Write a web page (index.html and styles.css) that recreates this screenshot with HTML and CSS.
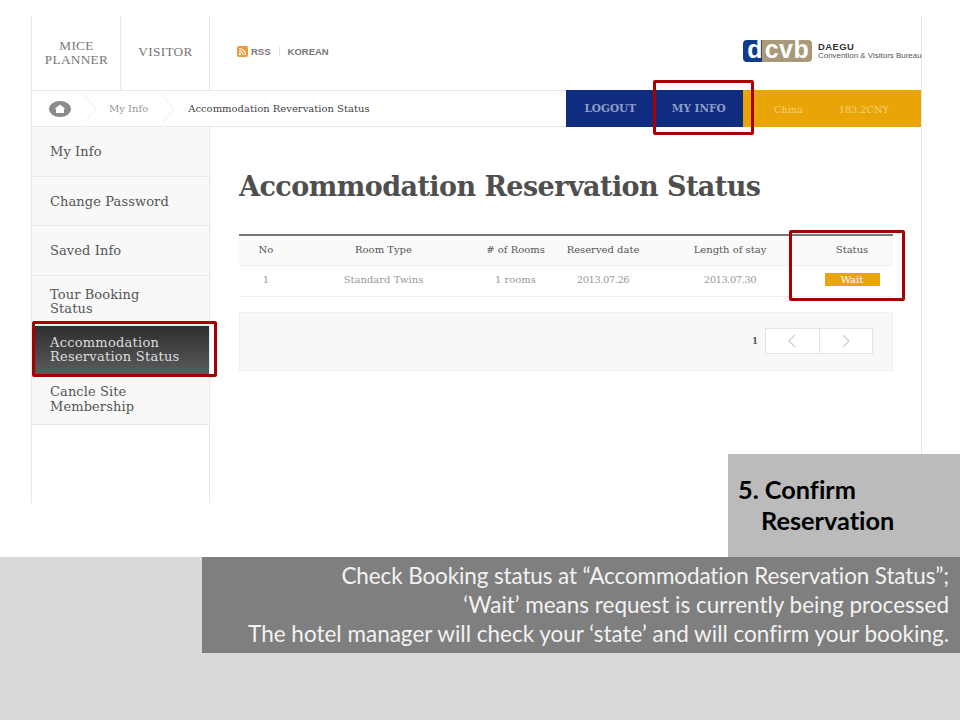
FILE: index.html
```html
<!DOCTYPE html>
<html lang="en">
<head>
<meta charset="utf-8">
<title>Accommodation Reservation Status</title>
<link rel="stylesheet" href="styles.css">
</head>
<body>
<div class="slide">
  <div class="site">
    <header class="top">
      <a class="top-tab tab-mice">MICE<br>PLANNER</a>
      <a class="top-tab tab-visitor">VISITOR</a>
      <div class="links">
        <svg class="rss" viewBox="0 0 11 11" width="11" height="11"><rect width="11" height="11" rx="2" fill="#ee9a3a"/><circle cx="3" cy="8" r="1.2" fill="#fff"/><path d="M2 5a4 4 0 0 1 4 4M2 2.500A6.500 6.500 0 0 1 8.500 9" fill="none" stroke="#fff" stroke-width="1.200"/></svg>
        <span>RSS</span><i class="sep"></i><span>KOREAN</span>
      </div>
      <div class="logo">
        <span class="logo-d">d</span><span class="logo-cvb">cvb</span>
        <div class="logo-text"><b>DAEGU</b><span>Convention &amp; Visitors Bureau</span></div>
      </div>
    </header>
    <div class="bar">
      <div class="crumbs">
        <span class="home"><svg viewBox="0 0 22 16" width="22" height="16"><ellipse cx="11" cy="8" rx="11" ry="8" fill="#8a8a8a"/><path d="M5.500 8 11 3.500 16.500 8H15v4H7V8z" fill="#fff"/></svg></span>
        <svg class="chev" viewBox="0 0 14 30" width="14" height="30"><path d="M1 1l12 14L1 29" fill="none" stroke="#eee"/></svg>
        <span class="crumb-a">My Info</span>
        <svg class="chev" viewBox="0 0 14 30" width="14" height="30"><path d="M1 1l12 14L1 29" fill="none" stroke="#eee"/></svg>
        <span class="crumb-b">Accommodation Revervation Status</span>
      </div>
      <div class="user-blue"><span>LOGOUT</span><span>MY INFO</span></div>
      <div class="user-gold"><span>China</span><span>183.2CNY</span></div>
    </div>
    <div class="content">
      <nav class="side">
        <a class="item">My Info</a>
        <a class="item">Change Password</a>
        <a class="item">Saved Info</a>
        <a class="item item-low">Tour Booking<br>Status</a>
        <a class="item item-flat active">Accommodation<br>Reservation Status</a>
        <a class="item item-flat">Cancle Site<br>Membership</a>
      </nav>
      <main class="main">
        <h1>Accommodation Reservation Status</h1>
        <table>
          <thead>
            <tr><th class="c1">No</th><th class="c2">Room Type</th><th class="c3"># of Rooms</th><th class="c4">Reserved date</th><th class="c5">Length of stay</th><th class="c6">Status</th></tr>
          </thead>
          <tbody>
            <tr><td>1</td><td>Standard Twins</td><td>1 rooms</td><td class="date">2013.07.26</td><td class="date">2013.07.30</td><td><span class="wait">Wait</span></td></tr>
          </tbody>
        </table>
        <div class="pager">
          <b>1</b>
          <div class="pager-btns">
            <span><svg viewBox="0 0 10 14" width="10" height="14"><path d="M8 1 2 7l6 6" fill="none" stroke="#ccc" stroke-width="1.200"/></svg></span>
            <span><svg viewBox="0 0 10 14" width="10" height="14"><path d="M2 1l6 6-6 6" fill="none" stroke="#ccc" stroke-width="1.200"/></svg></span>
          </div>
        </div>
      </main>
    </div>
  </div>
  <div class="tag">
    <p>5. Confirm</p>
    <p class="indent">Reservation</p>
  </div>
  <footer class="foot">
    <div class="note">
      <p class="tight">Check Booking status at “Accommodation Reservation Status”;</p>
      <p>‘Wait’ means request is currently being processed</p>
      <p>The hotel manager will check your ‘state’ and will confirm your booking.</p>
    </div>
  </footer>
  <div class="mark mark-info"></div>
  <div class="mark mark-status"></div>
  <div class="mark mark-side"></div>
</div>
</body>
</html>
```
FILE: styles.css
```css
* { box-sizing: border-box; }
html, body { margin: 0; padding: 0; background: #fff; }
p, h1 { margin: 0; }
.slide {
  position: relative;
  width: 960px;
  height: 720px;
  overflow: hidden;
  background: #fff;
  padding-top: 16px;
  font-family: "DejaVu Serif", serif;
}
.site {
  margin-left: 31px;
  width: 891px;
  height: 487px;
  border-left: 1px solid #e8e8e8;
  border-right: 1px solid #e8e8e8;
  display: flex;
  flex-direction: column;
}
.top {
  height: 74px;
  display: flex;
  align-items: center;
}
.top-tab {
  height: 74px;
  border-right: 1px solid #e6e6e6;
  display: flex;
  align-items: center;
  justify-content: center;
  text-align: center;
  font-family: "Liberation Serif", serif;
  font-size: 13.300px;
  line-height: 14px;
  color: #777;
  letter-spacing: .3px;
}
.tab-mice { width: 89px; padding-left: 1px; }
.tab-visitor { width: 89px; padding: 0 0 2px 1px; }
.links {
  margin-left: 27px;
  margin-bottom: 3px;
  display: flex;
  align-items: center;
  font-family: "Liberation Sans", sans-serif;
  font-size: 9.500px;
  font-weight: bold;
  color: #777;
}
.rss { margin-right: 3px; }
.sep { width: 1px; height: 9px; background: #ddd; margin: 0 8px; }
.logo {
  margin-left: auto;
  display: flex;
  align-items: center;
  height: 22px;
  font-family: "Liberation Sans", sans-serif;
  font-weight: bold;
  margin-bottom: 4px;
}
.logo-d, .logo-cvb {
  height: 22px;
  display: flex;
  align-items: center;
  justify-content: center;
  color: #fff;
  font-size: 25px;
  line-height: 1;
  padding-bottom: 3px;
}
.logo-d { width: 19px; background: #123a8c; border-radius: 4px 0 0 4px; padding-left: 5px; }
.logo-cvb { width: 50px; background: #a89a78; border-radius: 0 4px 4px 0; letter-spacing: .5px; }
.logo-text {
  display: flex;
  flex-direction: column;
  width: 103px;
  margin-left: 6px;
  color: #333;
  line-height: 9px;
}
.logo-text b { font-size: 9.500px; letter-spacing: .4px; }
.logo-text span { font-weight: normal; color: #555; font-size: 7.950px; white-space: nowrap; }
.bar {
  height: 37px;
  display: flex;
  border-top: 1px solid #e8e8e8;
  border-bottom: 1px solid #e8e8e8;
}
.crumbs {
  width: 534px;
  display: flex;
  align-items: center;
  padding-left: 17px;
  font-size: 10px;
  white-space: nowrap;
}
.home { display: flex; margin-right: 12px; }
.chev { margin-right: 12px; }
.crumb-a { color: #999; margin-right: 13px; }
.crumb-b { color: #444; margin-left: 1px; }
.user-blue {
  width: 177px;
  background: #0f2c80;
  display: flex;
  font-size: 10.500px;
  font-weight: bold;
  color: #8d9cc4;
  margin: -1px 0;
}
.user-blue span { width: 89px; text-align: center; line-height: 37px; }
.user-gold {
  width: 178px;
  background: #e9a507;
  display: flex;
  gap: 36px;
  padding-left: 31px;
  color: #f5cf78;
  font-size: 9.700px;
  line-height: 39px;
  margin: -1px 0;
}
.content { flex: 1; display: flex; min-height: 0; }
.side {
  width: 178px;
  border-right: 1px solid #e8e8e8;
  display: flex;
  flex-direction: column;
}
.item {
  height: 49.670px;
  background: #f8f8f8;
  border-bottom: 1px solid #e8e8e8;
  padding: 2px 0 0 18px;
  display: flex;
  align-items: center;
  font-size: 13px;
  line-height: 14.500px;
  letter-spacing: .1px;
  color: #555;
  white-space: nowrap;
}
.item-low { padding-top: 4px; }
.item-flat { padding-top: 0; }
.item.active {
  color: #ddd;
  border-bottom: 0;
  background: linear-gradient(#2e2e2e, #5c5c5c);
  letter-spacing: .25px;
}
.main { flex: 1; padding: 44px 28px 0 29px; }
h1 {
  font-size: 27px;
  font-weight: bold;
  color: #4f4f4f;
  line-height: 32px;
  white-space: nowrap;
  letter-spacing: -.55px;
}
table {
  width: 654px;
  margin-top: 31px;
  border-collapse: collapse;
  table-layout: fixed;
  font-size: 10px;
}
th {
  height: 30px;
  background: #fafafa;
  border-top: 2px solid #777;
  border-bottom: 1px solid #eee;
  font-weight: normal;
  color: #555;
  padding: 0 0 2px;
}
td {
  height: 31px;
  border-bottom: 1px solid #eee;
  text-align: center;
  color: #999;
  padding: 0 0 2px;
}
td.date { letter-spacing: -.5px; }
.c1 { width: 54px; }
.c2 { width: 181px; }
.c3 { width: 83px; }
.c4 { width: 92px; }
.c5 { width: 162px; }
.c6 { width: 82px; }
.wait {
  display: block;
  width: 55px;
  margin: 0 auto;
  background: #e9a507;
  color: #fff;
  line-height: 13px;
  height: 13px;
}
.pager {
  width: 654px;
  height: 59px;
  margin-top: 15px;
  background: #f8f8f8;
  border: 1px solid #f0f0f0;
  display: flex;
  align-items: center;
  justify-content: flex-end;
  padding-right: 19px;
  font-size: 8.500px;
  color: #555;
}
.pager-btns {
  display: flex;
  margin-left: 7px;
  width: 108px;
  height: 26px;
  background: #fff;
  border: 1px solid #e4e4e4;
}
.pager-btns span {
  flex: 1;
  display: flex;
  align-items: center;
  justify-content: center;
}
.pager-btns span + span { border-left: 1px solid #e4e4e4; }
.tag {
  position: absolute;
  left: 728px;
  top: 454px;
  width: 232px;
  height: 103px;
  background: #bbb;
  padding: 20px 0 0 10px;
  font-family: "Lato", sans-serif;
  font-weight: bold;
  font-size: 25.300px;
  line-height: 31px;
  color: #000;
  font-variant-ligatures: none;
}
.indent { padding-left: 23px; }
.foot {
  margin-top: 54px;
  height: 163px;
  background: #d9d9d9;
  padding-left: 202px;
}
.note {
  height: 96px;
  background: #7f7f7f;
  padding: 4px 11px 0 0;
  text-align: right;
  color: #f2f2f2;
  font-family: "Lato", sans-serif;
  font-size: 22.500px;
  font-variant-ligatures: none;
  line-height: 29px;
  white-space: nowrap;
}
.tight { letter-spacing: -.12px; }
.mark {
  position: absolute;
  border: 3px solid #a80000;
  border-radius: 2px;
}
.mark-info { left: 653px; top: 80px; width: 101px; height: 55px; }
.mark-status { left: 789px; top: 230px; width: 116px; height: 71px; }
.mark-side { left: 32px; top: 321px; width: 185px; height: 56px; }
```
